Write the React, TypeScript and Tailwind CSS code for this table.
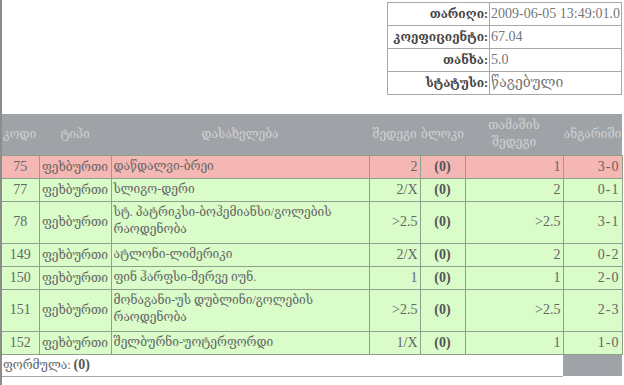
import React from "react";

const rows = [
  { id: "75", name: "დაწდალვი-ბრეი", r: "2", g: "1", s: "3-0", pink: true },
  { id: "77", name: "სლიგო-დერი", r: "2/X", g: "2", s: "0-1" },
  { id: "78", name: "სტ. პატრიკსი-ბოჰემიანსი/გოლების რაოდენობა", r: ">2.5", g: ">2.5", s: "3-1", two: true },
  { id: "149", name: "ატლონი-ლიმერიკი", r: "2/X", g: "2", s: "0-2" },
  { id: "150", name: "ფინ ჰარფსი-მერვე იუნ.", r: "1", g: "1", s: "2-0" },
  { id: "151", name: "მონაგანი-უს დუბლინი/გოლების რაოდენობა", r: ">2.5", g: ">2.5", s: "2-3", two: true },
  { id: "152", name: "შელბურნი-უოტერფორდი", r: "1/X", g: "1", s: "1-0" },
];

const font = { fontFamily: '"Liberation Serif", "DejaVu Serif", "DejaVu Sans", serif' };

export default function App() {
  return (
    <div className="w-[624px] h-[385px] bg-white border-l-2 border-[#8c8c8c] text-[13px] text-[#666] overflow-hidden" style={font}>
      <div className="flex justify-end pt-[2px] pr-[2px]">
        <table className="border-collapse w-[235px]">
          <tbody>
            {[
              ["თარიღი:", "2009-06-05 13:49:01.0"],
              ["კოეფიციენტი:", "67.04"],
              ["თანხა:", "5.0"],
              ["სტატუსი:", "წაგებული"],
            ].map(([a, b]) => (
              <tr key={a} className="h-[23px]">
                <td className="border border-[#a8a8a8] w-[102px] text-right font-bold text-[#444] pr-[1px] leading-[18px] text-[12px]">{a}</td>
                <td className="border border-[#a8a8a8] pl-[1px] leading-[18px] text-[14px] text-[#777]">{b}</td>
              </tr>
            ))}
          </tbody>
        </table>
      </div>
      <table className="border-collapse mt-[19px] w-[620px] table-fixed">
        <colgroup>
          <col className="w-[37px]" />
          <col className="w-[72px]" />
          <col className="w-[258px]" />
          <col className="w-[51px]" />
          <col className="w-[45px]" />
          <col className="w-[98px]" />
          <col className="w-[59px]" />
        </colgroup>
        <thead>
          <tr className="h-[41px] bg-[#9fa3a7] text-[#cfd1d3] text-[12px] leading-[17px]">
            <th className="font-normal text-left pl-[1px]">კოდი</th>
            <th className="font-normal text-center">ტიპი</th>
            <th className="font-normal text-center">დასახელება</th>
            <th className="font-normal text-center">შედეგი</th>
            <th className="font-normal text-center">ბლოკი</th>
            <th className="font-normal text-center px-[10px]">თამაშის შედეგი</th>
            <th className="font-normal text-center">ანგარიში</th>
          </tr>
        </thead>
        <tbody>
          {rows.map((r) => (
            <tr key={r.id} className={(r.pink ? "bg-[#f5b7b3] " : "bg-[#d9fcc9] ") + (r.two ? "h-[42px]" : "h-[23px]")}>
              <td className="border border-[#8fa08c] border-l-0 text-center text-[14px] leading-[18px]">{r.id}</td>
              <td className="border border-[#8fa08c] text-center text-[12px] leading-[18px] px-0 whitespace-nowrap">ფეხბურთი</td>
              <td className={"border border-[#8fa08c] pl-[2px] text-[12px] leading-[17px] " + (r.two ? "align-top pt-[2px]" : "")}>{r.name}</td>
              <td className="border border-[#8fa08c] text-right pr-[2px] text-[14px] leading-[18px]">{r.r}</td>
              <td className="border border-[#8fa08c] text-center font-bold text-[#555] text-[14px] leading-[18px]">(0)</td>
              <td className="border border-[#8fa08c] text-right pr-[2px] text-[14px] leading-[18px]">{r.g}</td>
              <td className="border border-[#8fa08c] text-right pr-[2px] text-[14px] leading-[18px] tracking-[1px]">{r.s}</td>
            </tr>
          ))}
          <tr className="h-[22px]">
            <td colSpan={6} className="bg-white border-b border-[#a8a8a8] pl-[1px] text-[12px] leading-[18px]">
              ფორმულა: <span className="font-bold text-[#555] text-[14px]">(0)</span>
            </td>
            <td className="bg-[#9fa3a7]"></td>
          </tr>
        </tbody>
      </table>
    </div>
  );
}
